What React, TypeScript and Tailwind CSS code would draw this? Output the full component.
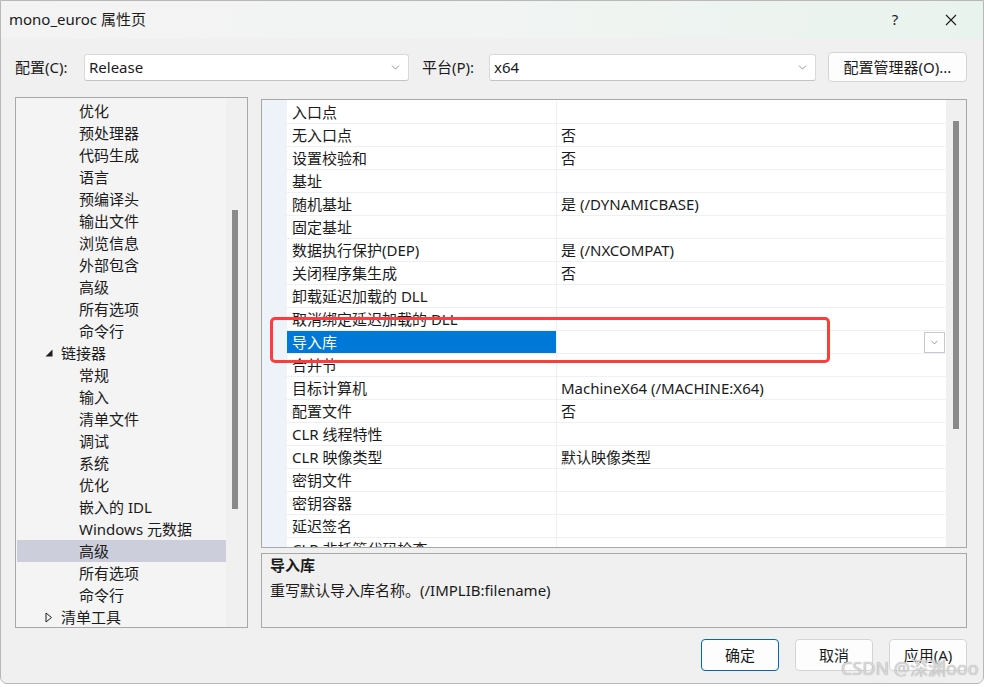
import { ChevronDown } from 'lucide-react';

const font = "font-['Noto_Sans','Noto_Sans_CJK_SC',sans-serif]";

type TreeItem = { label: string; level: 'parent' | 'child'; expanded?: boolean; selected?: boolean };

const treeItems: TreeItem[] = [
    { label: '优化', level: 'child' },
    { label: '预处理器', level: 'child' },
    { label: '代码生成', level: 'child' },
    { label: '语言', level: 'child' },
    { label: '预编译头', level: 'child' },
    { label: '输出文件', level: 'child' },
    { label: '浏览信息', level: 'child' },
    { label: '外部包含', level: 'child' },
    { label: '高级', level: 'child' },
    { label: '所有选项', level: 'child' },
    { label: '命令行', level: 'child' },
    { label: '链接器', level: 'parent', expanded: true },
    { label: '常规', level: 'child' },
    { label: '输入', level: 'child' },
    { label: '清单文件', level: 'child' },
    { label: '调试', level: 'child' },
    { label: '系统', level: 'child' },
    { label: '优化', level: 'child' },
    { label: '嵌入的 IDL', level: 'child' },
    { label: 'Windows 元数据', level: 'child' },
    { label: '高级', level: 'child', selected: true },
    { label: '所有选项', level: 'child' },
    { label: '命令行', level: 'child' },
    { label: '清单工具', level: 'parent', expanded: false },
];

// name / value pairs of the linker "advanced" page
const props: [string, string][] = [
    ['入口点', ''],
    ['无入口点', '否'],
    ['设置校验和', '否'],
    ['基址', ''],
    ['随机基址', '是 (/DYNAMICBASE)'],
    ['固定基址', ''],
    ['数据执行保护(DEP)', '是 (/NXCOMPAT)'],
    ['关闭程序集生成', '否'],
    ['卸载延迟加载的 DLL', ''],
    ['取消绑定延迟加载的 DLL', ''],
    ['导入库', ''],
    ['合并节', ''],
    ['目标计算机', 'MachineX64 (/MACHINE:X64)'],
    ['配置文件', '否'],
    ['CLR 线程特性', ''],
    ['CLR 映像类型', '默认映像类型'],
    ['密钥文件', ''],
    ['密钥容器', ''],
    ['延迟签名', ''],
    ['CLR 非托管代码检查', ''],
];

function Combo({ value, width }: { value: string; width: string }) {
    return (
        <div className={`${width} h-[27px] bg-white border border-[#d9d9d9] border-b-[#c4c4c4] rounded-[3px] flex items-center pl-[4px] pr-[6px]`}>
            <span className="flex-1 text-[15px] leading-none text-[#1b1b1b]">{value}</span>
            <ChevronDown className="w-[13px] h-[13px] text-[#606060]" strokeWidth={1.25} />
        </div>
    );
}

export default function App() {
    return (
        <div className={`${font} relative w-[984px] h-[687px] bg-white overflow-hidden`}>
            <div className="w-[984px] h-[684px] bg-[#f0f0f0] border border-[#b8b8b8] rounded-b-[7px] flex flex-col">
                {/* Title bar */}
                <div className="h-[37px] flex items-center pl-[8px] pr-[4px] bg-gradient-to-r from-[#f3f3f3] via-[#f1f4f2] to-[#e9f3ee]">
                    <span className="flex-1 text-[15px] leading-none text-[#1b1b1b]">mono_euroc 属性页</span>
                    <span className="w-[56px] text-center text-[15px] leading-none text-[#1b1b1b]">?</span>
                    <span className="w-[56px] flex justify-center">
                        <svg className="w-[12px] h-[12px]" viewBox="0 0 12 12">
                            <path d="M1 1L11 11M11 1L1 11" stroke="#1b1b1b" strokeWidth={1.1} />
                        </svg>
                    </span>
                </div>

                {/* Configuration row */}
                <div className="mt-[14px] h-[30px] flex items-center pl-[14px] pr-[16px] text-[15px] text-[#1b1b1b]">
                    <span className="w-[69px]">配置(C):</span>
                    <Combo value="Release" width="w-[325px]" />
                    <span className="ml-[13px] w-[67px]">平台(P):</span>
                    <Combo value="x64" width="w-[327px]" />
                    <button className="ml-auto w-[139px] h-[30px] bg-[#fdfdfd] border border-[#d4d4d4] rounded-[4px] text-[15px] text-[#1b1b1b]">
                        配置管理器(O)...
                    </button>
                </div>

                {/* Main area */}
                <div className="mt-[15px] flex pl-[14px] pr-[16px] gap-[13px]">
                    {/* Tree */}
                    <div className="w-[233px] h-[531px] border border-[#a8a8a8] bg-[#f4f4f4] flex overflow-hidden">
                        <div className="w-[210px] pt-[2px] pl-[1px]">
                            {treeItems.map((item, i) => (
                                <div
                                    key={i}
                                    className={`h-[22px] flex items-center text-[15px] leading-[22px] text-[#1b1b1b] ${item.selected ? 'bg-[#cccedb]' : ''} ${item.level === 'child' ? 'pl-[62px]' : 'pl-[28px]'}`}
                                >
                                    {item.level === 'parent' && (
                                        <span className="w-[16px] flex items-center">
                                            {item.expanded ? (
                                                <svg width="8" height="8" viewBox="0 0 8 8">
                                                    <polygon points="7.5,0.5 7.5,7.5 0.5,7.5" fill="#1e1e1e" />
                                                </svg>
                                            ) : (
                                                <svg width="8" height="11" viewBox="0 0 8 11">
                                                    <polygon points="1,1 6.5,5.5 1,10" fill="none" stroke="#1e1e1e" strokeWidth={1} />
                                                </svg>
                                            )}
                                        </span>
                                    )}
                                    <span>{item.label}</span>
                                </div>
                            ))}
                        </div>
                        <div className="w-[21px] bg-[#f0f0f0] pt-[112px] pl-[6px]">
                            <div className="w-[6px] h-[299px] bg-[#8a8a8a]" />
                        </div>
                    </div>

                    {/* Property grid + description */}
                    <div className="flex-1 pt-[2px] flex flex-col gap-[5px]">
                        <div className="h-[449px] border border-[#a8a8a8] bg-white flex overflow-hidden">
                            <div className="w-[25px] bg-[#eef3fa]" />
                            <div className="flex-1 pt-[1px] overflow-hidden">
                                {props.map(([name, value], i) => {
                                    const sel = name === '导入库';
                                    return (
                                        <div key={i} className="h-[23px] flex border-b border-[#edf1f7] text-[15px] leading-[23px]">
                                            <div className={`w-[270px] pl-[5px] border-r border-[#edf1f7] overflow-hidden ${sel ? 'bg-[#0078d7] text-white' : 'text-[#1b1b1b]'}`}>
                                                {name}
                                            </div>
                                            <div className="flex-1 pl-[4px] text-[#1b1b1b] flex items-center">
                                                <span className="flex-1">{value}</span>
                                                {sel && (
                                                    <div className="w-[21px] h-[21px] border border-[#c9c9c9] bg-white flex items-center justify-center mr-[1px]">
                                                        <ChevronDown className="w-[11px] h-[11px] text-[#555]" strokeWidth={1.25} />
                                                    </div>
                                                )}
                                            </div>
                                        </div>
                                    );
                                })}
                            </div>
                            <div className="w-[20px] bg-[#f0f0f0] pt-[21px] pl-[7px]">
                                <div className="w-[6px] h-[308px] bg-[#8a8a8a]" />
                            </div>
                        </div>
                        <div className="h-[75px] border border-[#a8a8a8] bg-[#f0f0f0] px-[8px] text-[15px] text-[#1b1b1b]">
                            <div className="font-bold leading-[23px]">导入库</div>
                            <div className="leading-[26px]">重写默认导入库名称。(/IMPLIB:filename)</div>
                        </div>
                    </div>
                </div>

                {/* Buttons */}
                <div className="mt-[11px] flex justify-end gap-[16px] pr-[16px] text-[15px] text-[#1b1b1b]">
                    <button className="w-[78px] h-[32px] bg-[#fdfdfd] border-[1.5px] border-[#0067c0] rounded-[4px]">确定</button>
                    <button className="w-[78px] h-[32px] bg-[#fdfdfd] border border-[#d4d4d4] rounded-[4px]">取消</button>
                    <button className="w-[78px] h-[32px] bg-[#fdfdfd] border border-[#d4d4d4] rounded-[4px]">应用(A)</button>
                </div>
            </div>

            {/* Red annotation box */}
            <div className="absolute left-[270px] top-[317px] w-[560px] h-[46px] border-[3px] border-[#fe3c3c] rounded-[5px]" />

            {/* Watermark */}
            <div className="absolute left-[841px] top-[655px] text-[18px] leading-[26px] text-[#dadada] [text-shadow:0_0_1px_#8f8f8f]">
                CSDN @深渊ooo
            </div>
        </div>
    );
}
